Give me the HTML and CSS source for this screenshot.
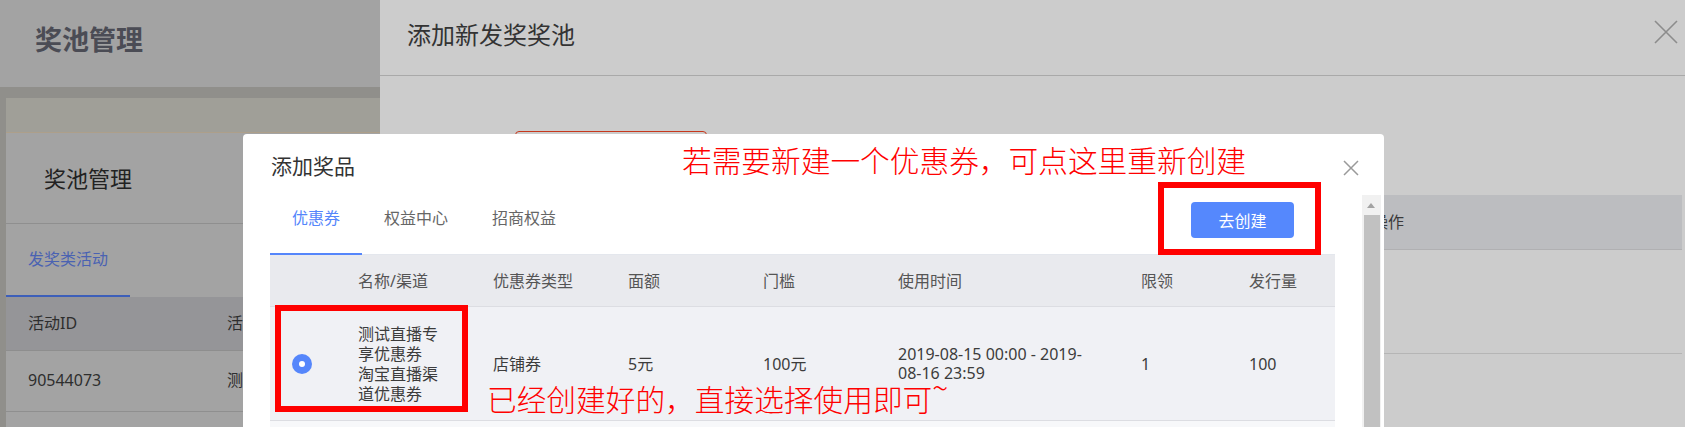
FILE: index.html
```html
<!DOCTYPE html>
<html lang="zh-CN">
<head>
<meta charset="UTF-8">
<title>奖池管理</title>
<link rel="stylesheet" href="styles.css">
</head>
<body>
<div class="screen">
    <div class="page">
        <div class="page-head">奖池管理</div>
        <div class="page-body">
            <div class="card">
                <div class="card-banner"></div>
                <div class="card-title">奖池管理</div>
                <div class="card-tabs"><span class="card-tab">发奖类活动</span></div>
                <div class="list-row list-head"><span>活动ID</span><span>活动名称</span></div>
                <div class="list-row"><span>90544073</span><span>测试直播活动</span></div>
            </div>
        </div>
    </div>

    <div class="drawer">
        <div class="drawer-head">
            <span class="drawer-title">添加新发奖奖池</span>
            <svg class="drawer-close" width="24" height="24" viewBox="0 0 24 24">
                <path d="M1 1L23 23M23 1L1 23" stroke="#8c8c8c" stroke-width="1.6" fill="none"/>
            </svg>
        </div>
        <div class="drawer-body">
            <div class="form-row">
                <span class="form-label">奖品</span>
                <div class="form-input"></div>
            </div>
            <div class="pool-table">
                <div class="pool-row pool-head"><span>奖品名称</span><span>操作</span></div>
                <div class="pool-row"><span></span><span></span></div>
            </div>
        </div>
    </div>
</div>

<!-- 添加奖品弹窗 -->
<div class="modal">
    <div class="modal-title">添加奖品</div>
    <svg class="modal-close" width="16" height="16" viewBox="0 0 16 16">
        <path d="M1 1L15 15M15 1L1 15" stroke="#9a9a9a" stroke-width="1.5" fill="none"/>
    </svg>

    <div class="modal-tabs">
        <span class="tab active">优惠券</span>
        <span class="tab">权益中心</span>
        <span class="tab">招商权益</span>
        <button class="btn-create">去创建</button>
    </div>

    <div class="coupon-table">
        <div class="coupon-row coupon-head">
            <span></span>
            <span>名称/渠道</span>
            <span>优惠券类型</span>
            <span>面额</span>
            <span>门槛</span>
            <span>使用时间</span>
            <span>限领</span>
            <span>发行量</span>
        </div>
        <div class="coupon-row coupon-body">
            <span class="radio-cell"><i class="radio checked"></i></span>
            <span><div class="coupon-name">测试直播专享优惠券</div><div class="coupon-name">淘宝直播渠道优惠券</div></span>
            <span>店铺券</span>
            <span>5元</span>
            <span>100元</span>
            <span class="time-cell">2019-08-15 00:00 - 2019-<br>08-16 23:59</span>
            <span>1</span>
            <span>100</span>
        </div>
        <div class="coupon-row coupon-next"></div>
    </div>

    <div class="modal-scroll"><div class="scroll-thumb"></div></div>
</div>

<!-- 标注 -->
<div class="mark-box box-create"></div>
<div class="mark-box box-coupon"></div>
<div class="mark-text note-create">若需要新建一个优惠券，可点这里重新创建</div>
<div class="mark-text note-pick">已经创建好的，直接选择使用即可<span class="tilde">~</span></div>
</body>
</html>
```

FILE: styles.css
```css
body {
    margin: 0;
    width: 1685px;
    height: 427px;
    overflow: hidden;
    position: relative;
    font-family: "Noto Sans", "Noto Sans CJK SC", sans-serif;
    color: #333;
}
.screen {
    display: flex;
    height: 427px;
}

/* 左侧页面（遮罩下） */
.page {
    width: 380px;
    display: flex;
    flex-direction: column;
    background-color: #a3a3a3;
}
.page-head {
    height: 87px;
    line-height: 80px;
    padding-left: 35px;
    font-size: 27px;
    font-weight: bold;
    color: #4b4c55;
}
.page-body {
    flex: 1;
    background-color: #908f8b;
    padding: 11px 0 0 6px;
}
.card {
    height: 100%;
    background-color: #a3a3a3;
}
.card-banner {
    height: 34px;
    background-color: #a09f98;
    border-bottom: 1px solid #ad9f8a;
}
.card-title {
    height: 90px;
    line-height: 90px;
    padding-left: 38px;
    font-size: 22px;
    color: #222;
    border-bottom: 1px solid #8f8f8f;
}
.card-tabs {
    display: flex;
}
.card-tab {
    padding: 0 22px;
    line-height: 71px;
    font-size: 16px;
    color: #4a62b2;
    border-bottom: 2px solid #3d5fb9;
}
.list-row {
    display: grid;
    grid-template-columns: 199px 1fr;
    height: 60px;
    line-height: 59px;
    font-size: 16px;
    color: #2e2e2e;
    border-bottom: 1px solid #8f8f8f;
    white-space: nowrap;
}
.list-row span {
    padding-left: 22px;
}
.list-head {
    height: 53px;
    line-height: 52px;
    background-color: #959598;
    border-bottom-color: #8e8e8e;
}

/* 抽屉 */
.drawer {
    flex: 1;
    background-color: #ccc;
}
.drawer-head {
    display: flex;
    justify-content: space-between;
    align-items: flex-start;
    height: 75px;
    padding: 0 7px 0 27px;
    border-bottom: 1px solid #a9a9a9;
}
.drawer-title {
    font-size: 24px;
    line-height: 70px;
    color: #333;
}
.drawer-close {
    margin-top: 20px;
}
.drawer-body {
    padding: 0 3px 0 27px;
}
.form-row {
    display: flex;
    margin-top: 55px;
    height: 32px;
}
.form-label {
    width: 108px;
    font-size: 16px;
    line-height: 32px;
}
.form-input {
    width: 192px;
    box-sizing: border-box;
    border: 1px solid #c7381c;
    border-radius: 4px;
}
.pool-table {
    margin-top: 32px;
}
.pool-row {
    display: grid;
    grid-template-columns: 1fr 310px;
    height: 103px;
    border-bottom: 1px solid #b5b5b5;
    font-size: 16px;
}
.pool-head {
    height: 54px;
    line-height: 54px;
    background-color: #bcbdc0;
    border-bottom-color: #b0b0b2;
    color: #3a3a3a;
}

/* 添加奖品弹窗 */
.modal {
    position: absolute;
    left: 243px;
    top: 134px;
    width: 1141px;
    height: 320px;
    background-color: #fff;
    border-radius: 4px;
}
.modal-title {
    padding: 16px 0 0 28px;
    font-size: 21px;
    line-height: 33px;
    color: #333;
}
.modal-close {
    position: absolute;
    top: 26px;
    right: 25px;
}
.modal-tabs {
    display: flex;
    width: 1065px;
    height: 72px;
    margin-left: 27px;
    box-shadow: inset 0 -1px 0 #e4e7ed;
}
.tab {
    padding: 0 22px;
    line-height: 70px;
    font-size: 16px;
    color: #666;
    border-bottom: 2px solid transparent;
}
.tab.active {
    color: #5586fb;
    border-bottom-color: #5586fb;
}
.btn-create {
    align-self: center;
    margin: 2px 41px 0 auto;
    width: 103px;
    height: 36px;
    border: none;
    border-radius: 4px;
    background-color: #5588fd;
    color: #fff;
    font-family: inherit;
    font-size: 16px;
}
.coupon-table {
    width: 1065px;
    margin-left: 27px;
}
.coupon-row {
    display: grid;
    grid-template-columns: 72px 135px 135px 135px 135px 243px 108px 1fr;
    align-items: center;
    box-sizing: border-box;
    border-bottom: 1px solid #dcdde2;
    font-size: 16px;
    line-height: 20px;
}
.coupon-row span {
    padding-left: 16px;
}
.coupon-head {
    height: 52px;
    background-color: #e9eaee;
    color: #555;
}
.coupon-body {
    height: 114px;
    background-color: #f0f1f5;
    color: #3c3c3c;
}
.coupon-next {
    height: 60px;
    background-color: #f7f8fa;
    border: none;
}
.coupon-name {
    width: 88px;
}
.time-cell {
    line-height: 19px;
}
.coupon-row .radio-cell {
    padding-left: 22px;
    display: flex;
}
.radio {
    position: relative;
    width: 20px;
    height: 20px;
    border-radius: 50%;
    background-color: #5586fb;
}
.radio.checked::after {
    content: "";
    position: absolute;
    left: 7px;
    top: 7px;
    width: 6px;
    height: 6px;
    border-radius: 50%;
    background-color: #fff;
}
.modal-scroll {
    position: absolute;
    top: 61px;
    right: 3px;
    bottom: 0;
    width: 19px;
    background-color: #f1f1f1;
}
.modal-scroll::before {
    content: "";
    position: absolute;
    left: 5px;
    top: 8px;
    border-left: 4px solid transparent;
    border-right: 4px solid transparent;
    border-bottom: 5px solid #a3a3a3;
}
.scroll-thumb {
    position: absolute;
    top: 20px;
    left: 2px;
    right: 1px;
    bottom: 0;
    background-color: #c1c1c1;
}

/* 红色标注 */
.mark-box {
    position: absolute;
    box-sizing: border-box;
    border: 6px solid #f00;
}
.box-create {
    left: 1158px;
    top: 182px;
    width: 163px;
    height: 73px;
}
.box-coupon {
    left: 275px;
    top: 305px;
    width: 193px;
    height: 107px;
}
.mark-text {
    position: absolute;
    color: #f00;
    font-family: "Noto Sans CJK SC", sans-serif;
    font-size: 29.7px;
    line-height: 30px;
    font-weight: 300;
    white-space: nowrap;
}
.note-create {
    left: 682px;
    top: 145px;
}
.note-pick {
    left: 487px;
    top: 384px;
}
.tilde {
    position: relative;
    top: -12px;
}
```
